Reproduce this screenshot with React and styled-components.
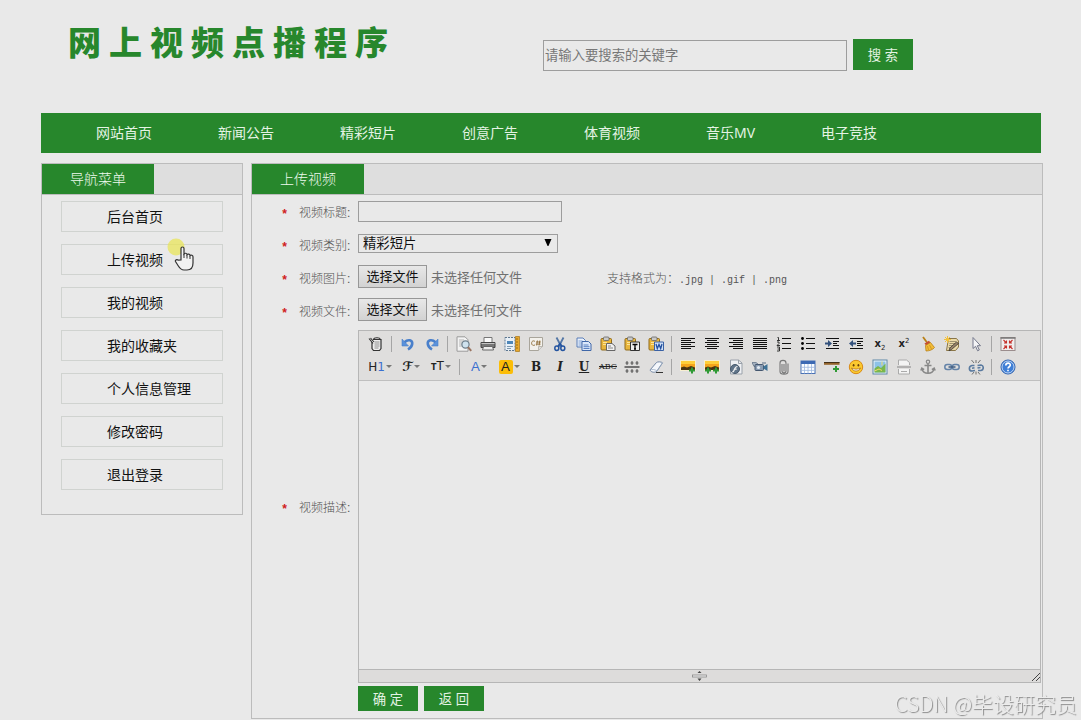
import { useState } from "react"
import styled, { createGlobalStyle } from "styled-components"

const GREEN = "#27872c"

const navItems = ["网站首页", "新闻公告", "精彩短片", "创意广告", "体育视频", "音乐MV", "电子竞技"]

const menuItems = ["后台首页", "上传视频", "我的视频", "我的收藏夹", "个人信息管理", "修改密码", "退出登录"]

const categories = ["精彩短片", "创意广告", "体育视频", "音乐MV", "电子竞技"]

const lines = (rows) => (
  <path
    d={rows.map(([x1, x2, y]) => `M${x1} ${y}.5H${x2}`).join("")}
    stroke="#111"
    fill="none"
    shapeRendering="crispEdges"
  />
)

const clipboard = (
  <>
    <rect x="1" y="2.5" width="10.5" height="11.5" rx="1" fill="#e8b63c" stroke="#8f6a1c" />
    <rect x="3.5" y="1" width="5.5" height="3.5" rx="1" fill="#c9c9c9" stroke="#666" strokeWidth=".8" />
    <path d="M3 6.5h4M3 8.5h3" stroke="#fbe49a" />
  </>
)

const plus = (x, y) => (
  <path d={`M${x} ${y - 3}v6M${x - 3} ${y}h6`} stroke="#2f9a35" strokeWidth="2" />
)

const picture = (
  <>
    <rect x=".5" y="1.5" width="15" height="10" fill="#f5a51c" stroke="#f7efd2" />
    <path d="M1 2h14v3H1z" fill="#ffcf3a" />
    <path d="M1 11V8.500l3-1 3 1 4-1.500 4 1.500V11z" fill="#4a3413" />
  </>
)

const icons = {
  source: (
    <>
      <path d="M5 3.5h8v9l-1.5 2H5.5L4 12.5V6" fill="#eee" stroke="#333" strokeWidth="1.2" />
      <path d="M5.5 3.5C6 1.5 11.5 1 12.5 3.5M1 2.500l4 5M2.5 2l3.5 4" fill="none" stroke="#333" strokeWidth="1.1" />
      <path d="M6.500 6h5M6.500 8h5M6.500 10h5M6.500 12h4" stroke="#777" strokeWidth=".8" />
    </>
  ),
  undo: (
    <>
      <path d="M4.500 6.200C8 2.800 12.700 4 12.200 8c-.3 2.500-2 4.200-4.200 5.500" fill="none" stroke="#4a80cb" strokeWidth="2.600" />
      <path d="M2 3v7h6.500z" fill="#5b92db" stroke="#4a80cb" strokeWidth=".6" />
    </>
  ),
  redo: (
    <>
      <path d="M11.500 6.200C8 2.800 3.300 4 3.800 8c.3 2.500 2 4.200 4.200 5.500" fill="none" stroke="#4a80cb" strokeWidth="2.600" />
      <path d="M14 3v7H7.500z" fill="#5b92db" stroke="#4a80cb" strokeWidth=".6" />
    </>
  ),
  preview: (
    <>
      <path d="M1 .8h8l3 3v11.400H1z" fill="#f3f3f3" stroke="#9a9a9a" />
      <path d="M3 4h5M3 6h4M3 8h3M3 10h3" stroke="#b5b5b5" />
      <circle cx="9.500" cy="8.500" r="3.600" fill="#cfe2ee" stroke="#6d7f8c" strokeWidth="1.200" />
      <path d="M12 11.200l3.200 3.600" stroke="#9a7460" strokeWidth="2" />
    </>
  ),
  print: (
    <>
      <path d="M4 6V1.500h8V6" fill="#fafafa" stroke="#777" />
      <path d="M1 6.500h14v5H1z" fill="#777" stroke="#444" />
      <path d="M1.500 7.500h13" stroke="#c4c4c4" />
      <path d="M3.500 10.500h9l1 3.500h-11z" fill="#eee" stroke="#666" />
    </>
  ),
  template: (
    <>
      <path d="M1 1.500h10v13H1z" fill="#e8f0f7" stroke="#5d7791" strokeDasharray="2 1" />
      <path d="M3 5h6v3H3z" fill="#4d86b8" />
      <path d="M3 10.500h6M3 12.500h4" stroke="#7d98ae" />
      <path d="M11.500.5h4v15h-4z" fill="#e8a92d" stroke="#a8751a" strokeWidth=".7" />
      <path d="M12 3h2M12 6h2M12 9h2M12 12h2" stroke="#805000" strokeWidth=".7" />
    </>
  ),
  code: (
    <>
      <path d="M1.500 1.500h13v9l-4 4h-9z" fill="#f3f1ec" stroke="#a9a59b" />
      <path d="M10.500 14.500v-4h4" fill="#ddd" stroke="#a9a59b" strokeWidth=".7" />
      <path d="M7 5.500C5 4 3.600 5.500 3.600 7.200S5 10 7 9M9.400 4.500l-.7 5M11.800 4.500l-.7 5M8 6h4.800M7.800 8.100h4.800" fill="none" stroke="#8c6a34" strokeWidth=".9" />
    </>
  ),
  cut: (
    <>
      <path d="M4.500 1.500L9.500 11M11.500 1.500L6.500 11" stroke="#5477a6" strokeWidth="1.800" />
      <path d="M8 7.500l2 3M8 7.500l-2 3" stroke="#2454a0" strokeWidth="1.600" />
      <ellipse cx="4.800" cy="12.300" rx="2" ry="2.200" fill="none" stroke="#2454a0" strokeWidth="1.500" />
      <ellipse cx="10.800" cy="12.300" rx="2" ry="2.200" fill="none" stroke="#2454a0" strokeWidth="1.500" />
    </>
  ),
  copy: (
    <>
      <path d="M1 2h6l2.500 2.500V11H1z" fill="#eaf1fb" stroke="#5b7fb8" />
      <path d="M2.500 5h4M2.500 7h4M2.500 9h4" stroke="#7ea0d4" />
      <path d="M6 5.500h6.500L15 8v6.500H6z" fill="#dbe8fb" stroke="#4067a8" />
      <path d="M7.500 9h5M7.500 10.700h6M7.500 12.500h6" stroke="#5b82c2" />
    </>
  ),
  paste: (
    <>
      {clipboard}
      <path d="M6.500 7.500H12l3 2.500v4.500H6.500z" fill="#f1f1f1" stroke="#666" />
      <path d="M8 10h3M8 12h5" stroke="#888" />
    </>
  ),
  plainpaste: (
    <>
      {clipboard}
      <path d="M6.500 6h9v8.500h-9z" fill="#eee" stroke="#333" />
      <path d="M8.500 8.500h5M11 8.500v4.500M10 13h2" stroke="#000" strokeWidth="1.300" />
    </>
  ),
  wordpaste: (
    <>
      {clipboard}
      <path d="M6.500 6h9v8.500h-9z" fill="#cfe0f6" stroke="#3a62a5" />
      <path d="M8 8l1.300 4.500 1.700-4 1.700 4L14 8" fill="none" stroke="#23509e" strokeWidth="1.300" />
    </>
  ),
  left: lines([[1, 15, 2], [1, 11, 4], [1, 15, 6], [1, 11, 8], [1, 15, 10], [1, 11, 12]]),
  center: lines([[1, 15, 2], [3, 13, 4], [1, 15, 6], [3, 13, 8], [1, 15, 10], [3, 13, 12]]),
  right: lines([[1, 15, 2], [5, 15, 4], [1, 15, 6], [5, 15, 8], [1, 15, 10], [5, 15, 12]]),
  full: lines([[1, 15, 2], [1, 15, 4], [1, 15, 6], [1, 15, 8], [1, 15, 10], [1, 15, 12]]),
  ol: (
    <>
      {lines([[6, 15, 2], [6, 15, 7], [6, 15, 12]])}
      <path d="M1.500 1.500h1v3M1 4.500h3M1 6h2v1.500L1 9.500h3M1 11h2.500v4H1M1.500 13h2" fill="none" stroke="#222" strokeWidth=".9" />
    </>
  ),
  ul: (
    <>
      {lines([[6, 15, 2], [6, 15, 7], [6, 15, 12]])}
      <circle cx="2.500" cy="2.500" r="1.400" />
      <circle cx="2.500" cy="7.500" r="1.400" />
      <circle cx="2.500" cy="12.500" r="1.400" />
    </>
  ),
  indent: (
    <>
      {lines([[2, 15, 2], [9, 15, 5], [9, 13, 7], [9, 15, 9], [2, 15, 12]])}
      <path d="M1 6.500h3V4l4 3.500L4 11V8.500H1z" fill="#33517c" />
    </>
  ),
  outdent: (
    <>
      {lines([[2, 15, 2], [9, 15, 5], [9, 13, 7], [9, 15, 9], [2, 15, 12]])}
      <path d="M8 6.500H5V4L1 7.500 5 11V8.500h3z" fill="#33517c" />
    </>
  ),
  clear: (
    <>
      <path d="M3 1l4 5.500" stroke="#b98018" strokeWidth="1.800" />
      <path d="M4.500 7.500L9 4.800l1.500 2-4.200 3z" fill="#c64b32" />
      <path d="M5.500 9.500l5-3 4 5c-1.500 2-5 3.500-8.500 3.500z" fill="#f2bd38" stroke="#b98018" strokeWidth=".8" />
      <path d="M7.500 10l1 4M9.500 9l2 4" stroke="#c98e1e" strokeWidth=".8" />
    </>
  ),
  quickformat: (
    <>
      <path d="M4.500 2.500h8l2 2.500v6l-3 3.500h-9z" fill="#ead9a8" stroke="#8a7648" />
      <path d="M6 5.500h6M5.500 7.500h6M5 9.500h5M4.500 11.500h5" stroke="#8b8060" strokeWidth=".8" />
      <path d="M1 1l5 5M6 1L1 6M3.500 0v7M0 3.500h7" stroke="#f3c13a" />
      <path d="M14.500 7.500l-7 6-2.500 1.300.8-2.800 6.700-6z" fill="#9a8468" stroke="#3c3934" strokeWidth=".8" />
    </>
  ),
  select: (
    <path d="M5 1.500v11l2.600-2.200 2 4.500 1.700-.8-2-4.300h3.200z" fill="#f4f4f6" stroke="#75798c" />
  ),
  fullscreen: (
    <>
      <rect x="1" y="1.500" width="14" height="13" fill="#f0eeee" stroke="#9b8d8d" />
      <path d="M.5 2h15" stroke="#777" strokeWidth="1.500" />
      <path d="M4 7h2.500V4.500M12 7H9.500V4.500M4 10h2.500v2.500M12 10H9.500v2.500M6.500 7l-3-3M9.500 7l3-3M6.500 10l-3 3M9.500 10l3 3" fill="none" stroke="#c5312b" strokeWidth="1.100" />
    </>
  ),
  lineheight: (
    <>
      <path d="M.5 8h15" stroke="#444" strokeWidth="1.400" />
      <path d="M3 2v4M8 2v4M13 2v4M3 10v4M8 10v4M13 10v4M1.500 4h3M6.500 4h3M11.500 4h3M1.500 12h3M6.500 12h3M11.500 12h3" stroke="#444" strokeWidth=".9" />
    </>
  ),
  eraser: (
    <>
      <path d="M2 11l6.500-7.500c1-1 5-.8 6 .3L9 12c-1.500 2-6 1.500-7-1z" fill="#f4f7fb" stroke="#7286a3" />
      <path d="M2 11c2-1 5.500-.5 7 1l5.500-8" fill="none" stroke="#9cadc3" strokeWidth=".8" />
      <path d="M8 13.500h7" stroke="#333" />
    </>
  ),
  image: (
    <>
      {picture}
      {plus(12, 11.5)}
    </>
  ),
  multiimage: (
    <>
      {picture}
      {plus(4, 11.5)}
      {plus(12, 11.5)}
    </>
  ),
  flash: (
    <>
      <path d="M2.500 1h8l3.500 3v11H2.500z" fill="#eef0f3" stroke="#9aa1aa" />
      <path d="M10.500 1v3.500H14" fill="none" stroke="#9aa1aa" />
      <circle cx="7" cy="10" r="4.500" fill="#607489" stroke="#46586b" />
      <path d="M9.500 7.500C7 7.500 6.500 10 6 11.500s-1.300 1.500-1.800 1.500M6.500 10.200h2.200" fill="none" stroke="#f3f3f3" strokeWidth="1.200" />
    </>
  ),
  media: (
    <>
      <path d="M0 3.500h4l2 1.500v2.500H2z" fill="#a5b2c1" stroke="#66768a" strokeWidth=".8" />
      <rect x="3" y="5.500" width="8.500" height="6" rx="1" fill="#8a9cb2" stroke="#44566e" />
      <path d="M11.500 7.500L15.500 5v7l-4-2.500z" fill="#3f7296" />
      <circle cx="6.500" cy="8.500" r="1.600" fill="#e4ebf2" />
      <path d="M10 4h4" stroke="#5b6e86" />
    </>
  ),
  attachment: (
    <path d="M6 5v7c0 2.500 4 2.500 4 0V4c0-3.500-6-3.500-6 0v8.500c0 3.500 8 3.500 8 0V4.500M8 5v7.500" fill="none" stroke="#777" strokeWidth="1.100" />
  ),
  table: (
    <>
      <rect x="1" y="2" width="14" height="12.500" fill="#fbfdff" stroke="#4b72b5" />
      <path d="M1 2h14v3H1z" fill="#3c69b3" />
      <path d="M1 8.300h14M1 11.400h14M4.500 5v9.500M8 5v9.500M11.500 5v9.500" stroke="#9db7de" strokeWidth=".8" />
    </>
  ),
  hr: (
    <>
      <path d="M0 3h15.500v2.800H0z" fill="#94652c" />
      <path d="M0 3.500h15.500" stroke="#433018" />
      {plus(12, 10)}
    </>
  ),
  emoticon: (
    <>
      <circle cx="8" cy="8" r="6.700" fill="#fbc92f" stroke="#d98a16" />
      <ellipse cx="5.600" cy="6.300" rx=".9" ry="1.300" fill="#6b4208" />
      <ellipse cx="10.400" cy="6.300" rx=".9" ry="1.300" fill="#6b4208" />
      <path d="M3.500 9c1.500 4 7.500 4 9 0-2.500 1.500-6.500 1.500-9 0z" fill="#fff" stroke="#a3600c" strokeWidth=".7" />
    </>
  ),
  map: (
    <>
      <rect x="1" y="1" width="14" height="14" fill="#edf5fb" stroke="#5f87a8" />
      <path d="M2.500 2.500h11v11h-11z" fill="#8dc2e8" />
      <path d="M2.500 9.500L6 7l3 2 4.500-4.500v9h-11z" fill="#79b64c" />
      <path d="M2.500 12L7 10l3 1.500M10 2.500v4" fill="none" stroke="#f0dc6a" />
    </>
  ),
  pagebreak: (
    <>
      <path d="M2.500 6V1h8l3 2.500V6M2.500 10v5h11v-5" fill="#f4f4f4" stroke="#aaa" />
      <path d="M1 8h14" stroke="#999" strokeWidth="1.300" />
      <path d="M5 12.500h6" stroke="#aaa" />
    </>
  ),
  anchor: (
    <>
      <circle cx="8" cy="2.800" r="1.700" fill="none" stroke="#888" strokeWidth="1.200" />
      <path d="M8 4.500V14M4.500 6.500h7" stroke="#888" strokeWidth="1.600" />
      <path d="M1.800 9.500c.7 3 3 4.800 6.200 4.800s5.500-1.800 6.200-4.800M.8 11.500l1-2.500 2.400 1.500M15.200 11.500l-1-2.500-2.400 1.500" fill="none" stroke="#888" strokeWidth="1.400" />
    </>
  ),
  link: (
    <>
      <rect x=".8" y="5.500" width="7" height="5" rx="2.500" fill="none" stroke="#6483a8" strokeWidth="1.500" />
      <rect x="8.200" y="5.500" width="7" height="5" rx="2.500" fill="none" stroke="#6483a8" strokeWidth="1.500" />
      <path d="M4.500 8h7" stroke="#3f5d82" strokeWidth="1.500" />
    </>
  ),
  unlink: (
    <>
      <path d="M6.500 6.500H4C.5 7 .5 12 4 12l3-.5M9.500 6.500L13 6c3 .5 3 5 0 5.500H10M4 9.300l2.500-.5M9.500 9l3-.5" fill="none" stroke="#5a7a9f" strokeWidth="1.600" />
      <path d="M8 1v3M3.500 1L6 4M12.500 1L10 4M8 15.500v-3M4 15.500L6 13M12 15.500L10 13" stroke="#555" strokeWidth=".8" />
    </>
  ),
  about: (
    <>
      <circle cx="8" cy="8" r="7" fill="#3f7fd6" stroke="#2b5fae" />
      <circle cx="8" cy="8" r="6" fill="none" stroke="#dce9fa" strokeWidth=".8" />
      <path d="M5.800 6.400c0-3 4.500-2.900 4.500-.3C10.300 7.800 8 7.700 8 9.600M8 10.800v1.500" fill="none" stroke="#fff" strokeWidth="1.600" />
    </>
  ),
}

const topTools = [
  "source", "|", "undo", "redo", "|", "preview", "print", "template", "code", "cut", "copy", "paste",
  "plainpaste", "wordpaste", "|", "left", "center", "right", "full", "ol", "ul", "indent", "outdent",
  "sub", "sup", "clear", "quickformat", "select", "|", "fullscreen",
]

const bottomTools = [
  "heading", "font", "size", "|", "color", "mark", "bold", "italic", "underline", "strike", "lineheight",
  "eraser", "|", "image", "multiimage", "flash", "media", "attachment", "table", "hr", "emoticon", "map",
  "pagebreak", "anchor", "link", "unlink", "|", "about",
]

const Tool = ({ name }) => {
  if (name === "|") return <Separator />
  if (icons[name]) {
    return (
      <ToolButton type="button" aria-label={name}>
        <svg width="16" height="16" viewBox="0 0 16 16">{icons[name]}</svg>
      </ToolButton>
    )
  }
  switch (name) {
    case "heading":
      return <ToolButton type="button" $width={32}><Glyph>H<Blue>1</Blue></Glyph><Caret /></ToolButton>
    case "font":
      return <ToolButton type="button" $width={30}><ScriptGlyph>ℱ</ScriptGlyph><Caret /></ToolButton>
    case "size":
      return <ToolButton type="button" $width={30}><Glyph><Small>T</Small>T</Glyph><Caret /></ToolButton>
    case "color":
      return <ToolButton type="button" $width={30}><Blue>A</Blue><Caret /></ToolButton>
    case "mark":
      return <ToolButton type="button" $width={30}><Mark>A</Mark><Caret /></ToolButton>
    case "bold":
      return <ToolButton type="button"><Serif>B</Serif></ToolButton>
    case "italic":
      return <ToolButton type="button"><Serif as="i">I</Serif></ToolButton>
    case "underline":
      return <ToolButton type="button"><Serif as="u">U</Serif></ToolButton>
    case "strike":
      return <ToolButton type="button"><Strike>ABC</Strike></ToolButton>
    case "sub":
      return <ToolButton type="button"><Index>x<sub>2</sub></Index></ToolButton>
    default:
      return <ToolButton type="button"><Index>x<sup>2</sup></Index></ToolButton>
  }
}

const FileField = ({ id }) => (
  <FilePicker>
    <FileButton>选择文件</FileButton>
    <FileName>未选择任何文件</FileName>
    <FileInput type="file" id={id} />
  </FilePicker>
)

const FieldLabel = ({ htmlFor, children }) => (
  <Label htmlFor={htmlFor}>
    <Star>*</Star>
    {children}
  </Label>
)

const App = () => {
  const [keyword, setKeyword] = useState("")
  const [title, setTitle] = useState("")
  const [category, setCategory] = useState(categories[0])
  const [content, setContent] = useState("")

  return (
    <Page>
      <GlobalStyle />
      <Header>
        <Logo aria-label="网上视频点播程序">
          {[..."网上视频点播程序"].map((char) => <span key={char}>{char}</span>)}
        </Logo>
        <SearchForm onSubmit={(e) => e.preventDefault()}>
          <SearchInput
            aria-label="搜索"
            placeholder="请输入要搜索的关键字"
            value={keyword}
            onChange={(e) => setKeyword(e.target.value)}
          />
          <SearchButton>搜 索</SearchButton>
        </SearchForm>
      </Header>

      <Nav>
        {navItems.map((item) => <NavLink href="#" key={item}>{item}</NavLink>)}
      </Nav>

      <Columns>
        <Sidebar>
          <PanelHead><PanelTitle>导航菜单</PanelTitle></PanelHead>
          <Menu>
            {menuItems.map((item) => (
              <li key={item}><MenuLink href="#">{item}</MenuLink></li>
            ))}
          </Menu>
        </Sidebar>

        <Main>
          <PanelHead><PanelTitle>上传视频</PanelTitle></PanelHead>
          <form onSubmit={(e) => e.preventDefault()}>
            <Row>
              <FieldLabel htmlFor="title">视频标题:</FieldLabel>
              <TextInput id="title" value={title} onChange={(e) => setTitle(e.target.value)} />
            </Row>
            <Row>
              <FieldLabel htmlFor="category">视频类别:</FieldLabel>
              <SelectBox>
                <Select id="category" value={category} onChange={(e) => setCategory(e.target.value)}>
                  {categories.map((item) => <option key={item}>{item}</option>)}
                </Select>
                <SelectArrow viewBox="0 0 8 8"><path d="M0 0h8L4.500 8h-1z" /></SelectArrow>
              </SelectBox>
            </Row>
            <Row>
              <FieldLabel htmlFor="picture">视频图片:</FieldLabel>
              <FileField id="picture" />
              <Hint>支持格式为：<code>.jpg | .gif | .png</code></Hint>
            </Row>
            <Row>
              <FieldLabel htmlFor="video">视频文件:</FieldLabel>
              <FileField id="video" />
            </Row>
            <EditorRow>
              <FieldLabel htmlFor="content">视频描述:</FieldLabel>
              <Editor>
                <Toolbar>
                  <ToolRow>{topTools.map((name, i) => <Tool name={name} key={i} />)}</ToolRow>
                  <ToolRow>{bottomTools.map((name, i) => <Tool name={name} key={i} />)}</ToolRow>
                </Toolbar>
                <TextArea id="content" value={content} onChange={(e) => setContent(e.target.value)} />
                <StatusBar>
                  <svg width="15" height="10" viewBox="0 0 15 10">
                    <path d="M7.500 0l2 2h-4zM7.500 10l2-2.500h-4z" fill="#444" />
                    <rect x=".5" y="4" width="14" height="2" fill="#eee" stroke="#888" strokeWidth=".8" />
                  </svg>
                  <svg width="8" height="8" viewBox="0 0 8 8">
                    <path d="M0 8l8-8M4 8l4-4" stroke="#444" />
                  </svg>
                </StatusBar>
              </Editor>
            </EditorRow>
            <Actions>
              <ActionButton type="submit">确 定</ActionButton>
              <ActionButton type="button">返 回</ActionButton>
            </Actions>
          </form>
        </Main>
      </Columns>

      <Pointer width="30" height="36" viewBox="0 0 30 36">
        <circle cx="10" cy="9" r="8.500" fill="#e8e45a" opacity=".75" />
        <path
          d="M15 22V10.500c0-2 3-2 3 0V16c1-1.300 3-.8 3 .6 1-1 3-.5 3 .9 1-.8 3-.2 3 1.300V25c0 4-2 7-6 7h-3c-3 0-4.500-2-6-4.500l-2.500-4c-.6-1.500 1.500-2.500 2.600-1.300z"
          fill="#f2f2f2"
          stroke="#333"
          strokeWidth="1.200"
        />
        <path d="M18 16v4M21 17v3.500M24 18v3" stroke="#333" />
      </Pointer>
      <Watermark>CSDN @毕设研究员</Watermark>
    </Page>
  )
}

const GlobalStyle = createGlobalStyle`
  * {
    box-sizing: border-box;
  }

  body {
    margin: 0;
    background: #e9e9e9;
    font-family: "Liberation Sans", "Noto Sans CJK SC", sans-serif;
    font-size: 12px;
  }

  a {
    text-decoration: none;
  }

  input, button, select, textarea {
    font-family: inherit;
    margin: 0;
    border-radius: 0;
  }
`

const Page = styled.div`
  padding: 0 38px 0 41px;
`

const Header = styled.header`
  display: flex;
  height: 113px;
`

const Logo = styled.h1`
  display: flex;
  gap: 8px;
  width: 502px;
  margin: 0;
  padding: 20px 0 0 27px;
  color: ${GREEN};
  font-size: 33px;
  font-weight: 900;
  line-height: 48px;
`

const SearchForm = styled.form`
  display: flex;
  gap: 6px;
  padding-top: 39px;
`

const SearchInput = styled.input`
  width: 304px;
  height: 31px;
  margin-top: 1px;
  padding: 1px;
  border: 1px solid #9d9d9d;
  background: transparent;

  &::placeholder {
    color: #777;
  }
`

const ActionButton = styled.button`
  width: 60px;
  height: 25px;
  padding: 0;
  border: none;
  background: ${GREEN};
  color: #e4f3e4;
`

const SearchButton = styled(ActionButton)`
  height: 31px;
`

const Nav = styled.nav`
  display: flex;
  height: 40px;
  margin-right: 2px;
  padding-left: 22px;
  background: ${GREEN};
`

const NavLink = styled.a`
  padding: 0 33px;
  color: #e4f3e4;
  font-family: "Noto Sans", "Noto Sans CJK SC", sans-serif;
  font-size: 14px;
  line-height: 40px;
`

const Columns = styled.div`
  display: flex;
  align-items: flex-start;
  gap: 8px;
  margin-top: 10px;
`

const Sidebar = styled.aside`
  width: 202px;
  border: 1px solid #bcbcbc;
`

const Main = styled.main`
  flex: 1;
  min-width: 0;
  border: 1px solid #bcbcbc;
`

const PanelHead = styled.div`
  display: flex;
  height: 31px;
  border-bottom: 1px solid #bcbcbc;
  background: #dedede;
`

const PanelTitle = styled.h2`
  width: 112px;
  margin: 0;
  background: ${GREEN};
  color: #eefaee;
  font-size: 14px;
  font-weight: 300;
  line-height: 30px;
  text-align: center;
`

const Menu = styled.ul`
  display: flex;
  flex-direction: column;
  gap: 12px;
  margin: 0;
  padding: 6px 19px 24px;
  list-style: none;
`

const MenuLink = styled.a`
  display: block;
  height: 31px;
  padding-left: 45px;
  border: 1px solid #d0d3d0;
  color: #111;
  font-size: 14px;
  line-height: 31px;
`

const Row = styled.div`
  display: flex;
  align-items: center;
  height: 33px;
`

const Label = styled.label`
  display: flex;
  flex: none;
  align-items: center;
  width: 106px;
  padding-left: 29px;
  color: #555;
  font-weight: 300;
`

const Star = styled.span`
  width: 18px;
  padding-top: 6px;
  color: #d02020;
  font-family: "Liberation Mono", monospace;
  font-weight: 700;
`

const TextInput = styled.input`
  width: 204px;
  height: 21px;
  border: 1px solid #9d9d9d;
  background: transparent;
`

const SelectBox = styled.div`
  position: relative;
  width: 200px;
  margin-bottom: 3px;
`

const Select = styled.select`
  display: block;
  width: 100%;
  height: 19px;
  padding: 0 4px;
  border: 1px solid #9d9d9d;
  background: transparent;
  color: #111;
  line-height: 17px;
  appearance: none;
`

const SelectArrow = styled.svg`
  position: absolute;
  top: 5px;
  right: 6px;
  width: 8px;
  height: 7px;
  pointer-events: none;
`

const FilePicker = styled.div`
  position: relative;
  display: flex;
  align-items: center;
  gap: 4px;
  width: 249px;
  margin-bottom: 2px;
  font-size: 13px;
`

const FileButton = styled.span`
  width: 69px;
  height: 23px;
  border: 1px solid #979797;
  background: linear-gradient(#e8e8e8, #d2d2d2);
  color: #111;
  line-height: 21px;
  text-align: center;
`

const FileName = styled.span`
  color: #707070;
`

const FileInput = styled.input`
  position: absolute;
  inset: 0;
  width: 100%;
  opacity: 0;
`

const Hint = styled.span`
  color: #555;
  font-weight: 300;

  code {
    font-family: "Liberation Mono", monospace;
    font-size: 10px;
  }
`

const EditorRow = styled.div`
  display: flex;
  align-items: center;
  margin: 3px 1px 0 0;
`

const Editor = styled.div`
  flex: 1;
  min-width: 0;
  border: 1px solid #b6b6b6;
`

const Toolbar = styled.div`
  padding: 1px 5px 2px;
  border-bottom: 1px solid #bfbfbf;
  background: #dfdedd;
`

const ToolRow = styled.div`
  display: flex;
  align-items: center;
  height: 23px;
`

const ToolButton = styled.button`
  display: flex;
  flex: none;
  align-items: center;
  justify-content: center;
  gap: 1px;
  width: ${({ $width }) => $width || 24}px;
  height: 20px;
  padding: 0;
  border: none;
  background: none;
  color: #222;
  line-height: 16px;
`

const Separator = styled.span`
  flex: none;
  width: 1px;
  height: 16px;
  margin: 0 4px 0 3px;
  background: #a5a5a5;
`

const Caret = styled.span`
  border: 3px solid transparent;
  border-top-color: #777;
  border-bottom: none;
`

const Glyph = styled.span`
  font-family: "DejaVu Sans", sans-serif;
  font-size: 12px;
`

const Blue = styled.span`
  color: #3b6fd0;
`

const Small = styled.span`
  font-size: 8px;
  font-weight: 700;
`

const ScriptGlyph = styled.b`
  font-family: "DejaVu Sans", serif;
  font-size: 13px;
`

const Mark = styled.span`
  width: 14px;
  border-radius: 2px;
  background: #fbbd08;
  line-height: 14px;
`

const Serif = styled.b`
  font-family: "DejaVu Serif", serif;
  font-size: 12px;
  font-weight: 700;
`

const Strike = styled.s`
  font-family: "DejaVu Serif", serif;
  font-size: 8px;
`

const Index = styled.span`
  font-family: "DejaVu Sans", sans-serif;
  font-size: 10px;
  font-weight: 700;

  sub, sup {
    font-size: 7px;
    font-weight: 400;
    line-height: 1;
  }
`

const TextArea = styled.textarea`
  display: block;
  width: 100%;
  height: 288px;
  border: none;
  background: transparent;
  resize: none;
`

const StatusBar = styled.div`
  display: grid;
  grid-template-columns: 1fr auto;
  align-items: end;
  justify-items: center;
  height: 13px;
  padding: 0 0 1px 8px;
  border-top: 1px solid #b6b6b6;
  background: #dddcdb;
`

const Actions = styled.div`
  display: flex;
  gap: 6px;
  padding: 3px 0 7px 106px;
`

const Pointer = styled.svg`
  position: absolute;
  top: 238px;
  left: 166px;
  pointer-events: none;
`

const Watermark = styled.div`
  position: fixed;
  right: 4px;
  bottom: 2px;
  color: #ececec;
  font-family: "Noto Sans CJK SC", sans-serif;
  font-size: 21px;
  font-weight: 300;
  line-height: 30px;
  text-shadow: 1px 1px 1px #888;
`

export default App
